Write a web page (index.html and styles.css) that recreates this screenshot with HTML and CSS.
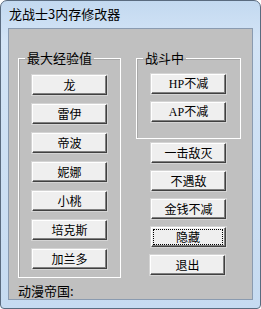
FILE: index.html
```html
<!DOCTYPE html>
<html lang="zh-CN">
<head>
<meta charset="UTF-8">
<title>龙战士3内存修改器</title>
<link rel="stylesheet" href="styles.css">
</head>
<body>

<!-- Window frame -->
<div class="window">
    <div class="titlebar">龙战士3内存修改器</div>

    <!-- Client area -->
    <div class="client">
        <div class="columns">
            <fieldset class="group group-exp">
                <legend>最大经验值</legend>
                <button class="btn">龙</button>
                <button class="btn">雷伊</button>
                <button class="btn">帝波</button>
                <button class="btn">妮娜</button>
                <button class="btn">小桃</button>
                <button class="btn">培克斯</button>
                <button class="btn">加兰多</button>
            </fieldset>

            <div class="right">
                <fieldset class="group group-battle">
                    <legend>战斗中</legend>
                    <button class="btn btn-latin">HP不减</button>
                    <button class="btn btn-latin">AP不减</button>
                </fieldset>
                <div class="actions">
                    <button class="btn">一击敌灭</button>
                    <button class="btn">不遇敌</button>
                    <button class="btn">金钱不减</button>
                    <button class="btn btn-focus"><span>隐藏</span></button>
                    <button class="btn btn-exit">退出</button>
                </div>
            </div>
        </div>
        <div class="status">动漫帝国:</div>
    </div>
</div>

</body>
</html>
```

FILE: styles.css
```css
/* Win7 style window with classic controls */
html, body {
    margin: 0;
    padding: 0;
}

body {
    width: 261px;
    height: 309px;
    overflow: hidden;
    background: #fff;
    font-family: "Noto Sans CJK SC", "DejaVu Sans", sans-serif;
}

.window {
    box-sizing: border-box;
    width: 261px;
    height: 309px;
    border: 1px solid #5a6b7f;
    border-radius: 7px 7px 4px 4px;
    background: linear-gradient(to bottom, #c3d9f0 0, #d3e4f6 40px, #c6dbf1 100%);
    padding: 0 7px 8px 7px;
    display: flex;
    flex-direction: column;
}

.titlebar {
    height: 28px;
    line-height: 26px;
    padding-left: 1px;
    font-size: 13px;
    color: #000;
}

.client {
    flex: 1;
    background: #c0c0c0;
    border: 1px solid #8a9bb0;
    display: flex;
    flex-direction: column;
    padding: 21px 0 0 9px;
}

.columns {
    display: flex;
    gap: 15px;
}

.group {
    margin: 0;
    min-width: 0;
    border: 1px solid #fff;
    box-shadow: inset 1px 1px 0 #a8a8a8;
    display: flex;
    flex-direction: column;
    align-items: center;
}

.group legend {
    margin-left: 6px;
    padding: 0 2px;
    font-size: 13px;
    line-height: 16px;
    color: #000;
}

.group-exp {
    width: 103px;
    box-sizing: border-box;
    height: 228px;
    padding: 9px 0 0 0;
    gap: 9px;
}

.group-battle {
    width: 105px;
    box-sizing: border-box;
    height: 89px;
    padding: 8px 0 0 0;
    gap: 8px;
}

.right {
    display: flex;
    flex-direction: column;
}

.actions {
    display: flex;
    flex-direction: column;
    padding: 4px 0 0 15px;
    gap: 8px;
}

.btn {
    box-sizing: border-box;
    width: 75px;
    height: 20px;
    margin: 0;
    padding: 0;
    font-family: "Noto Sans CJK SC", sans-serif;
    font-size: 12px;
    line-height: 16px;
    color: #000;
    background: #efefef;
    border: 1px solid;
    border-color: #fff #404040 #404040 #fff;
    box-shadow: inset -1px -1px 0 #808080, 0 0 0 1px #d4d4d4;
}

.btn-latin {
    font-family: "Liberation Serif", "Noto Sans CJK SC", serif;
}

.btn-focus span {
    display: block;
    margin: 0 2px 0 1px;
    border: 1px dotted #000;
    line-height: 14px;
}

.btn-exit {
    margin-left: -1px;
}

.status {
    margin-top: 5px;
    font-size: 13px;
    line-height: 16px;
    color: #000;
}
```
